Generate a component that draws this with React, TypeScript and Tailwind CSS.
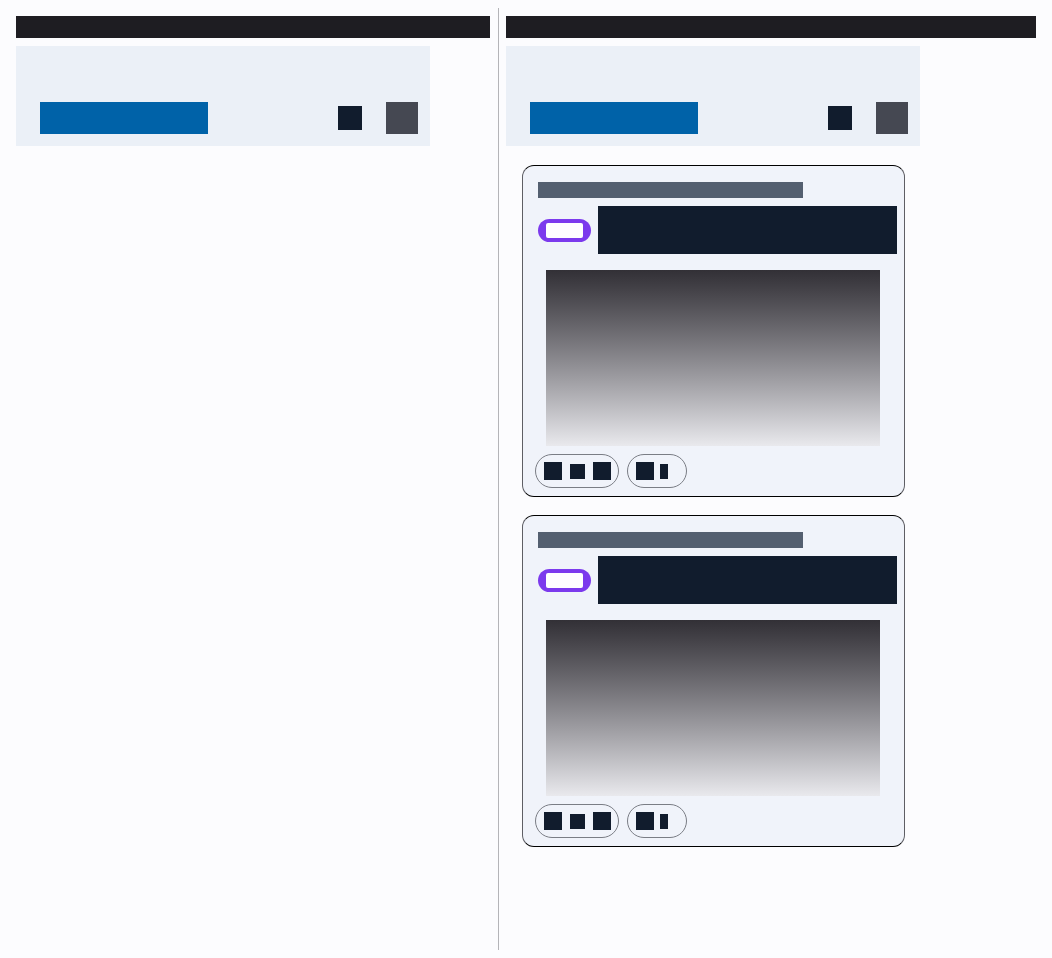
import React from "react";

const Toolbar = () => {
  return (
    <div className="mt-2 flex h-[100px] w-[414px] items-start bg-[#ebf0f7] pt-14 pl-6 pr-3">
      <div className="h-8 w-[168px] bg-[#0062a8]" />
      <div className="ml-auto mt-1 h-6 w-6 bg-[#111c2d]" />
      <div className="ml-6 h-8 w-8 bg-[#454852]" />
    </div>
  );
};

const Card = () => {
  return (
    <div className="ml-4 w-[383px] rounded-xl border border-[#5e5e64] border-t-black border-b-black bg-[#f0f3fa] px-[15px] pt-4 pb-2">
      <div className="h-4 w-[265px] bg-[#545f70]" />
      <div className="mt-2 flex items-center gap-[7px]">
        <div className="rounded-full bg-[#7c3aed] px-2 py-1">
          <div className="h-[15px] w-[37px] rounded-[2px] bg-white" />
        </div>
        <div className="h-12 w-[299px] shrink-0 bg-[#111c2d]" />
      </div>
      <div className="ml-2 mt-4 h-[176px] w-[334px] bg-linear-to-b from-[#323036] to-[#e9e9ed]" />
      <div className="-ml-[3px] mt-2 flex gap-2">
        <div className="flex h-[34px] w-[84px] items-center justify-center gap-2 rounded-full border border-[#7a7d85]">
          <div className="h-[18px] w-[18px] bg-[#111c2d]" />
          <div className="h-[15px] w-[15px] bg-[#111c2d]" />
          <div className="h-[18px] w-[18px] bg-[#111c2d]" />
        </div>
        <div className="flex h-[34px] w-[60px] items-center gap-1.5 rounded-full border border-[#7a7d85] pl-2">
          <div className="h-[18px] w-[18px] bg-[#111c2d]" />
          <div className="h-[15px] w-2 bg-[#111c2d]" />
        </div>
      </div>
    </div>
  );
};

const App = () => {
  return (
    <div className="flex h-[958px] bg-[#fcfcfe] px-4 py-2">
      <div className="w-[474px] pt-2">
        <div className="h-[22px] bg-[#1e1d22]" />
        <Toolbar />
      </div>
      <div className="ml-2 mr-[7px] w-px bg-[#b4b4b8]" />
      <div className="w-[530px] pt-2">
        <div className="h-[22px] bg-[#1e1d22]" />
        <Toolbar />
        <div className="mt-[19px] flex flex-col gap-[18px]">
          <Card />
          <Card />
        </div>
      </div>
    </div>
  );
};

export default App;
